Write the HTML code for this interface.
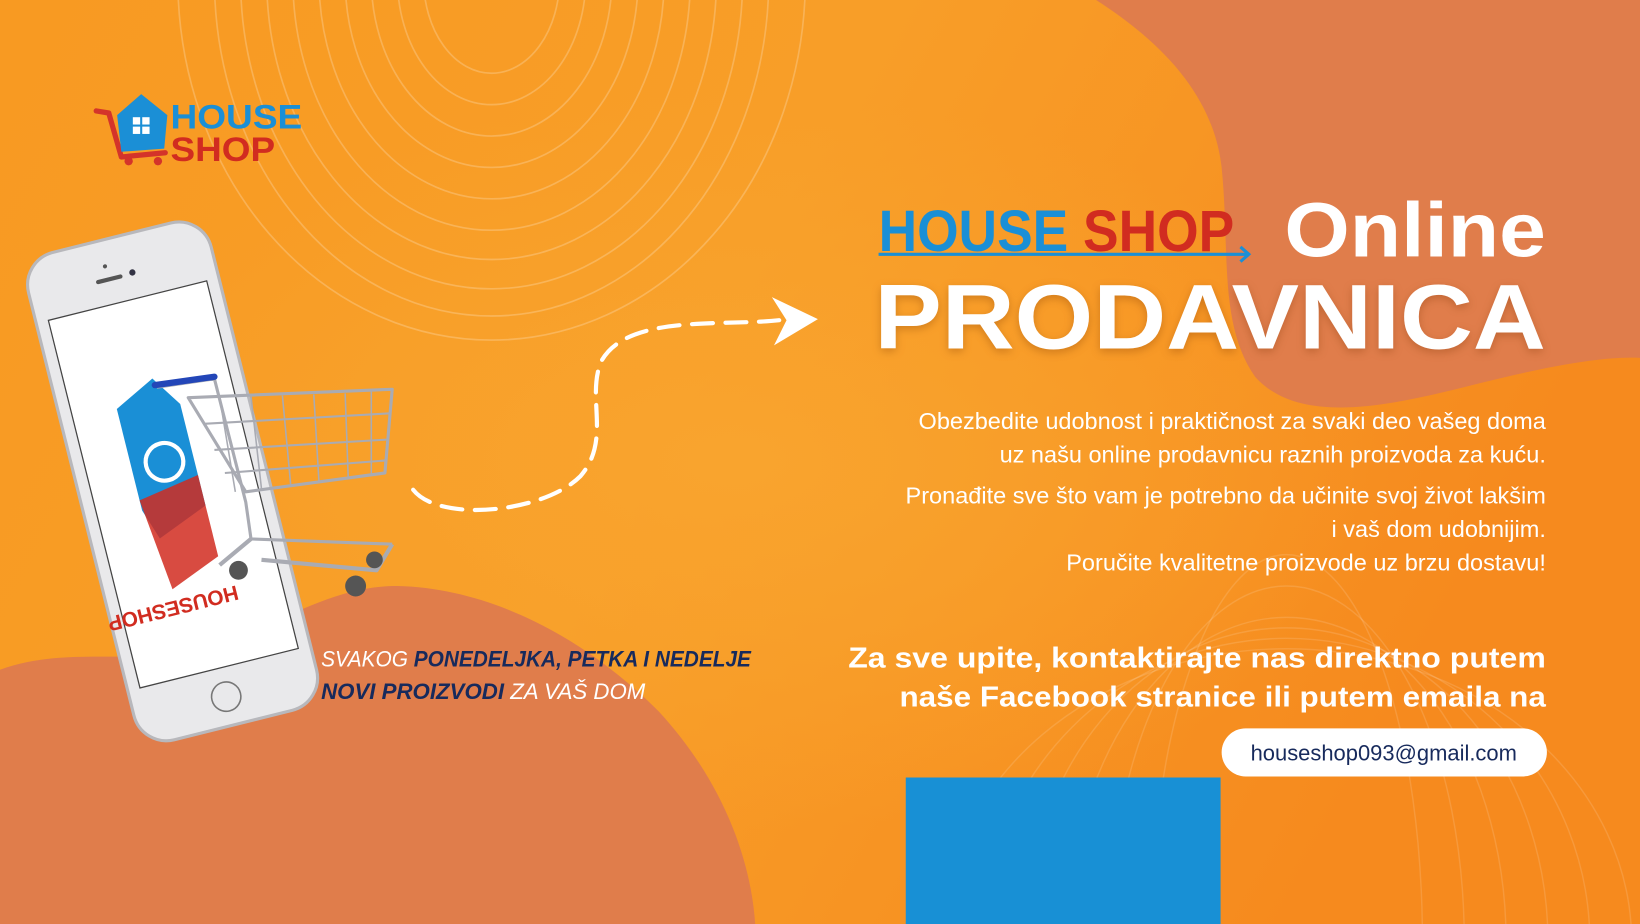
<!DOCTYPE html>
<html><head><meta charset="utf-8"><style>
html,body{margin:0;padding:0;width:1640px;height:924px;overflow:hidden;background:#f7961f}
svg{display:block;overflow:hidden}
text{font-family:"Liberation Sans",Arial,sans-serif}
</style></head><body>
<svg width="1640" height="924" viewBox="0 0 1568 883" preserveAspectRatio="none" xmlns="http://www.w3.org/2000/svg">
<defs>
<linearGradient id="bg" x1="0" y1="0" x2="1" y2="0.3">
<stop offset="0" stop-color="#f89a22"/><stop offset="0.5" stop-color="#f89e28"/><stop offset="1" stop-color="#f68a1e"/>
</linearGradient>
<radialGradient id="glow" cx="0.45" cy="0.5" r="0.4"><stop offset="0" stop-color="#f9a42e"/><stop offset="1" stop-color="#f9a42e" stop-opacity="0"/></radialGradient>
</defs>
<rect width="1568" height="883" fill="url(#bg)"/>
<rect width="1568" height="883" fill="url(#glow)"/>
<!-- contour lines -->
<g fill="none" stroke="#fff" stroke-opacity="0.22" stroke-width="1.6">
<ellipse cx="470" cy="-20" rx="65" ry="90"/>
<ellipse cx="470" cy="-20" rx="90" ry="120"/><ellipse cx="470" cy="-20" rx="115" ry="150"/>
<ellipse cx="470" cy="-20" rx="140" ry="180"/><ellipse cx="470" cy="-20" rx="165" ry="210"/>
<ellipse cx="470" cy="-20" rx="190" ry="240"/><ellipse cx="470" cy="-20" rx="215" ry="268"/>
<ellipse cx="470" cy="-20" rx="240" ry="296"/><ellipse cx="470" cy="-20" rx="265" ry="322"/>
<ellipse cx="470" cy="-20" rx="300" ry="345"/>
</g>
<g fill="none" stroke="#fff" stroke-opacity="0.13" stroke-width="1.4">
<ellipse cx="1230" cy="900" rx="130" ry="370"/><ellipse cx="1230" cy="900" rx="170" ry="340"/>
<ellipse cx="1230" cy="900" rx="210" ry="310"/><ellipse cx="1230" cy="900" rx="250" ry="300"/>
<ellipse cx="1230" cy="900" rx="290" ry="290"/><ellipse cx="1230" cy="900" rx="330" ry="280"/>
</g>
<!-- blobs -->
<path d="M1048,0 C1110,40 1160,90 1168,160 C1176,240 1165,310 1200,360 C1240,405 1320,390 1400,370 C1470,352 1530,340 1568,342 L1568,0 Z" fill="#e07d4b"/>
<path d="M0,640 C70,615 130,640 210,615 C280,590 320,560 380,560 C470,562 560,610 630,680 C690,745 718,820 722,883 L0,883 Z" fill="#e07d4b"/>
<!-- logo -->
<g>
<path d="M92,106 L104,108 L116,150 L158,146" fill="none" stroke="#d4342a" stroke-width="5" stroke-linecap="round" stroke-linejoin="round"/>
<circle cx="123" cy="154" r="4" fill="#d4342a"/><circle cx="151" cy="154" r="4" fill="#d4342a"/>
<path d="M112,110 L135,90 L160,110 L157,142 L116,145 Z" fill="#1b8fd6"/>
<rect x="127" y="112" width="7" height="7" fill="#fff"/><rect x="136" y="112" width="7" height="7" fill="#fff"/>
<rect x="127" y="121" width="7" height="7" fill="#fff"/><rect x="136" y="121" width="7" height="7" fill="#fff"/>
<text x="163" y="123" font-size="33" font-weight="bold" fill="#1a8fd6" textLength="126" lengthAdjust="spacingAndGlyphs">HOUSE</text>
<text x="163" y="154" font-size="33" font-weight="bold" fill="#d12c20" textLength="100" lengthAdjust="spacingAndGlyphs">SHOP</text>
</g>
<!-- phone -->
<g transform="rotate(-14 165 460)">
<rect x="75" y="220" width="180" height="480" rx="32" fill="#e9e9eb" stroke="#b8b8bc" stroke-width="3"/>
<rect x="87" y="282" width="156" height="362" fill="#fff" stroke="#444" stroke-width="1.2"/>
<rect x="140" y="256" width="26" height="4" rx="2" fill="#555"/>
<circle cx="152" cy="245" r="2" fill="#555"/><circle cx="176" cy="257" r="3" fill="#334"/>
<circle cx="165" cy="672" r="14" fill="none" stroke="#777" stroke-width="1.5"/>
<path d="M130,380 L170,360 L190,390 L190,490 L140,510 L130,480 Z" fill="#1a8fd6"/>
<path d="M130,470 L190,460 L190,540 L140,560 Z" fill="#d12c20" opacity="0.85"/>
<circle cx="162" cy="440" r="18" fill="none" stroke="#fff" stroke-width="4"/>
<text x="130" y="585" font-size="20" font-weight="bold" fill="#d12c20" transform="rotate(180 165 578)">HOUSESHOP</text>
</g>
<!-- cart -->
<g fill="none" stroke="#a9abb3" stroke-width="3" stroke-linejoin="round">
<path d="M150,370 L205,362 L235,480 L240,515 L375,520"/>
<path d="M180,380 L375,372 L368,452 L235,470 Z"/>
<path d="M195,405 L373,395 M205,430 L371,420 M215,452 L369,440" stroke-width="2"/>
<path d="M210,380 L225,470 M240,379 L250,467 M270,378 L278,464 M300,377 L305,461 M330,376 L333,458 M355,374 L355,455" stroke-width="1.5"/>
<path d="M240,515 L210,540 M375,520 L360,545 L250,535" stroke-width="4"/>
</g>
<path d="M148,368 L205,360" stroke="#2346b8" stroke-width="6" stroke-linecap="round"/>
<g fill="#555"><circle cx="228" cy="545" r="9"/><circle cx="340" cy="560" r="10"/><circle cx="358" cy="535" r="8"/></g>
<!-- dashed arrow -->
<path d="M395,468 C420,500 520,490 555,455 C585,420 560,380 575,345 C600,300 690,312 745,306" fill="none" stroke="#fff" stroke-width="4" stroke-dasharray="20 12" stroke-linecap="round"/>
<polygon points="738,284 782,305 740,330 752,306" fill="#fff"/>
<!-- italic text -->
<text x="307" y="637" font-size="21" font-style="italic" fill="#fff" textLength="411" lengthAdjust="spacingAndGlyphs">SVAKOG <tspan font-weight="bold" fill="#172a5c">PONEDELJKA, PETKA I NEDELJE</tspan></text>
<text x="307" y="668" font-size="21" font-style="italic" fill="#fff" textLength="310" lengthAdjust="spacingAndGlyphs"><tspan font-weight="bold" fill="#172a5c">NOVI PROIZVODI</tspan> ZA VAŠ DOM</text>
<!-- headline -->
<text x="840" y="240" font-size="56" font-weight="bold" textLength="340" lengthAdjust="spacingAndGlyphs"><tspan fill="#1a8fd6">HOUSE </tspan><tspan fill="#d12c20">SHOP</tspan></text>
<path d="M840,243 L1192,243" stroke="#1a8fd6" stroke-width="3"/>
<path d="M1186,236 L1194,243 L1186,250" fill="none" stroke="#1a8fd6" stroke-width="3"/>
<text x="1228" y="245" font-size="74" font-weight="bold" fill="#fff" textLength="250" lengthAdjust="spacingAndGlyphs">Online</text>
<text x="836" y="333" font-size="88" font-weight="bold" fill="#fff" textLength="642" lengthAdjust="spacingAndGlyphs" style="filter:drop-shadow(0 3px 4px rgba(120,50,0,.3))">PRODAVNICA</text>
<g font-size="22.5" fill="#fff" text-anchor="end">
<text x="1478" y="410">Obezbedite udobnost i praktičnost za svaki deo vašeg doma</text>
<text x="1478" y="442">uz našu online prodavnicu raznih proizvoda za kuću.</text>
<text x="1478" y="481">Pronađite sve što vam je potrebno da učinite svoj život lakšim</text>
<text x="1478" y="513">i vaš dom udobnijim.</text>
<text x="1478" y="545">Poručite kvalitetne proizvode uz brzu dostavu!</text>
</g>
<g font-size="27" font-weight="bold" fill="#fff" text-anchor="end">
<text x="1478" y="638" textLength="667" lengthAdjust="spacingAndGlyphs">Za sve upite, kontaktirajte nas direktno putem</text>
<text x="1478" y="675" textLength="618" lengthAdjust="spacingAndGlyphs">naše Facebook stranice ili putem emaila na</text>
</g>
<rect x="1168" y="696" width="311" height="46" rx="23" fill="#fff"/>
<text x="1323" y="727" font-size="21" fill="#172a5c" text-anchor="middle">houseshop093@gmail.com</text>
<rect x="866" y="743" width="301" height="140" fill="#1890d5"/>
</svg>
</body></html>
